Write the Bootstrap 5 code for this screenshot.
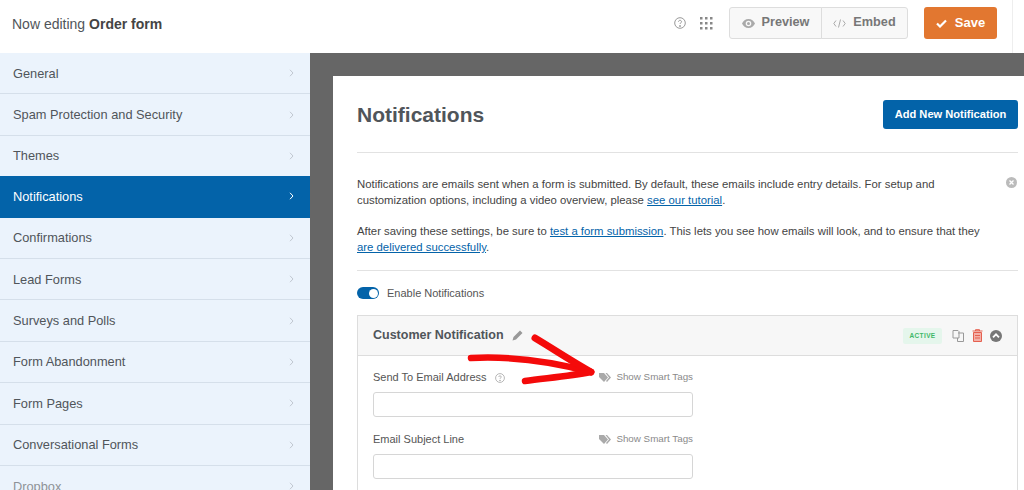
<!DOCTYPE html>
<html lang="en">

<head>
  <meta charset="UTF-8" />
  <meta name="viewport" content="width=device-width, initial-scale=1" />
  <title>Now editing Order form</title>
  <link href="https://cdn.jsdelivr.net/npm/bootstrap@5.3.3/dist/css/bootstrap.min.css" rel="stylesheet">
  <style>
    html, body { height: 490px; overflow: hidden; }
    body { font-family: "Liberation Sans", Arial, sans-serif; color: #50555a; background: #fff; }
    .top-bar { height: 53px; padding: 7px 15px 0 12px; margin-right: 11px; border-right: 1px solid #eee; }
    .top-title { font-size: 14px; color: #50555a; margin-top: 7px; }
    .top-title b { color: #444; }
    .top-gap { margin-right: 14px; }
    .top-btn { height: 32px; font-size: 12.7px; font-weight: 700; color: #777; background: #f8f8f8; border: 1px solid #ddd; border-radius: 3px; display: flex; align-items: center; gap: 7px; padding: 0; }
    .top-btn.prev { width: 93px; justify-content: center; }
    .top-btn.emb { width: 87px; justify-content: center; }
    .save-btn { width: 73px; height: 32px; padding: 0; font-size: 13px; font-weight: 700; background: #e27730; border: 0; border-radius: 3px; color: #fff; display: flex; align-items: center; justify-content: center; gap: 8px; }
    .work-area { height: 437px; }
    .side-menu { width: 310px; flex: none; border-radius: 0; background: #ebf3fc; overflow: hidden; }
    .side-menu .list-group-item { flex: none; height: 41.4px; padding: 0 13px; font-size: 12.8px; color: #50555a; background: #ebf3fc; border: 0; border-bottom: 1px solid #d5dfea; display: flex; justify-content: space-between; align-items: center; }
    .side-menu .list-group-item.active { background: #0363a9; color: #fff; border-color: #0363a9; }
    .side-menu .list-group-item.cut-off { color: #8e9297; }
    .side-menu svg { margin-right: 3px; color: #c0c7d0; }
    .side-menu .active svg { color: #fff; }
    .dark-area { background: #666; padding: 23px 0 0 23px; min-width: 0; }
    .main-panel { background: #fff; height: 100%; padding: 24px 6px 0 24px; overflow: hidden; }
    .panel-title { font-size: 21px; font-weight: 700; color: #50555a; margin: 0; line-height: 30px; }
    .panel-head { padding-bottom: 22px; }
    .add-btn { width: 135px; height: 29px; padding: 0; font-size: 11.1px; font-weight: 700; background: #0363a9; border: 0; border-radius: 3px; color: #fff; }
    .sep { margin: 0; border-color: #e2e2e2; opacity: 1; }
    .intro { font-size: 11.35px; line-height: 16px; color: #444; position: relative; padding-top: 23px; padding-bottom: 15px; }
    .intro p { margin: 0; width: 640px; }
    .intro p + p { margin-top: 15px; }
    .intro a { color: #0363a9; }
    .intro-close { position: absolute; right: 1px; top: 24px; }
    .switch-row { font-size: 11px; color: #555; height: 44px; }
    .blue-switch { width: 22px; height: 12px; border-radius: 6px; background: #0363a9; position: relative; flex: none; }
    .blue-switch::after { content: ""; position: absolute; right: 1.5px; top: 1.5px; width: 9px; height: 9px; background: #fff; border-radius: 50%; }
    .notif-card { border-radius: 0; border-color: #ddd; height: 300px; }
    .notif-head { height: 40px; padding: 0 15px; background: #f7f7f7; border-bottom: 1px solid #ddd; border-radius: 0 !important; }
    .notif-name { font-size: 12.5px; font-weight: 700; color: #50555a; }
    .active-tag { font-size: 6.5px; font-weight: 700; letter-spacing: .4px; color: #3fb868; background: #e5f6ec; height: 16px; width: 39px; border-radius: 2px; display: flex; align-items: center; justify-content: center; margin-right: 10px; }
    .head-icon { margin-left: 7px; }
    .field-box { width: 320px; margin-left: 15px; }
    .field-label { font-size: 11px; color: #555; height: 17px; }
    .tags-link { font-size: 9.8px; color: #8a8a8a; gap: 5px; }
    .field-box .form-control { height: 25px; border-radius: 3px; border-color: #d6d6d6; padding: 0 8px; margin-top: 6px; }
    .first-field { margin-top: 13px; }
    .second-field { margin-top: 14px; }
    .red-arrow { position: absolute; left: 465px; top: 330px; }
  </style>
</head>

<body>
  <div class="top-bar d-flex align-items-start">
    <div class="top-title">Now editing <b>Order form</b></div>
    <div class="ms-auto d-flex align-items-center">
      <svg width="12" height="12" viewBox="0 0 12 12" class="top-gap" fill="none" stroke="#999" stroke-width="1"><circle cx="6" cy="6" r="5.300"/><path d="M4.500 4.800c0-2 3-2 3 0 0 1.200-1.500 1-1.500 2.200"/><circle cx="6" cy="9" r=".5" fill="#999"/></svg>
      <svg width="13" height="13" viewBox="0 0 13 13" fill="#888" class="me-3"><rect x="0" y="0" width="2.500" height="2.500"/><rect x="5" y="0" width="2.500" height="2.500"/><rect x="10" y="0" width="2.500" height="2.500"/><rect x="0" y="5" width="2.500" height="2.500"/><rect x="5" y="5" width="2.500" height="2.500"/><rect x="10" y="5" width="2.500" height="2.500"/><rect x="0" y="10" width="2.500" height="2.500"/><rect x="5" y="10" width="2.500" height="2.500"/><rect x="10" y="10" width="2.500" height="2.500"/></svg>
      <div class="btn-group me-3">
        <button class="btn top-btn prev"><svg width="13" height="9" viewBox="0 0 13 9" fill="#aaa"><path d="M6.500 0C3.500 0 1.200 2 0 4.500 1.200 7 3.500 9 6.500 9S11.800 7 13 4.500C11.800 2 9.500 0 6.500 0Zm0 7.300a2.800 2.800 0 1 1 0-5.600 2.800 2.800 0 0 1 0 5.600Z"/><circle cx="6.500" cy="4.500" r="1.500"/></svg>Preview</button>
        <button class="btn top-btn emb"><svg width="13" height="9" viewBox="0 0 13 9" fill="none" stroke="#aaa" stroke-width="1"><path d="M3 1.500 .8 4.500 3 7.500M10 1.500l2.200 3-2.200 3M7.500 .5l-2 8"/></svg>Embed</button>
      </div>
      <button class="btn save-btn"><svg width="11" height="9" viewBox="0 0 11 9" fill="none" stroke="#fff" stroke-width="2.200"><path d="M1 4.500 4 7.500 10 1.500"/></svg>Save</button>
    </div>
  </div>

  <div class="work-area d-flex">
    <div class="list-group side-menu" id="sideMenu"></div>
    <div class="dark-area flex-grow-1">
      <div class="main-panel">
        <div class="panel-head d-flex justify-content-between align-items-start">
          <h1 class="panel-title">Notifications</h1>
          <button class="btn add-btn">Add New Notification</button>
        </div>
        <hr class="sep">
        <div class="intro">
          <p>Notifications are emails sent when a form is submitted. By default, these emails include entry details. For setup and customization options, including a video overview, please <a href="#">see our tutorial</a>.</p>
          <p>After saving these settings, be sure to <a href="#">test a form submission</a>. This lets you see how emails will look, and to ensure that they <a href="#">are delivered successfully</a>.</p>
          <svg class="intro-close" width="11" height="11" viewBox="0 0 11 11"><circle cx="5.500" cy="5.500" r="5.500" fill="#bbb"/><path d="M3.500 3.500l4 4M7.500 3.500l-4 4" stroke="#fff" stroke-width="1.300"/></svg>
        </div>
        <hr class="sep">
        <div class="switch-row d-flex align-items-center gap-2">
          <span class="blue-switch"></span><span>Enable Notifications</span>
        </div>
        <div class="card notif-card">
          <div class="card-header notif-head d-flex align-items-center">
            <span class="notif-name">Customer Notification</span>
            <svg class="ms-2" width="11" height="11" viewBox="0 0 11 11" fill="#999"><path d="M8 .5 10.500 3 4 9.500 .5 10.500 1.500 7Z"/></svg>
            <span class="active-tag ms-auto">ACTIVE</span>
            <svg width="13" height="13" viewBox="0 0 13 13" fill="none" stroke="#999" stroke-width="1"><path d="M1 1.500h5l1 1v6.500H1ZM6 4h5.500v8.500H5.500V9"/></svg>
            <svg class="head-icon" width="11" height="13" viewBox="0 0 11 13" fill="#f3b0a8" stroke="#e5604f" stroke-width="1"><path d="M1.500 3.500h8v9h-8ZM.5 2h10M3.500 2V.7h4V2M3 6.500h5M3 9h5"/></svg>
            <svg class="head-icon" width="12" height="12" viewBox="0 0 12 12"><circle cx="6" cy="6" r="6" fill="#777"/><path d="M3 7.300 6 4.300l3 3" fill="none" stroke="#fff" stroke-width="1.800"/></svg>
          </div>
          <div class="field-box first-field">
            <div class="field-label d-flex align-items-center">
              <span>Send To Email Address</span>
              <svg class="ms-2" width="10" height="10" viewBox="0 0 12 12" fill="none" stroke="#aaa" stroke-width="1"><circle cx="6" cy="6" r="5.300"/><path d="M4.500 4.800c0-2 3-2 3 0 0 1.200-1.500 1-1.500 2.200"/><circle cx="6" cy="9" r=".5" fill="#aaa"/></svg>
              <span class="tags-link ms-auto d-flex align-items-center"><svg width="12" height="9" viewBox="0 0 12 9" fill="#aaa"><path d="M0 0h5l4 4.500L5 9 0 4Z"/><path d="M6.500 0H8l4 4.500L8 9 7 8l3-3.500Z"/></svg>Show Smart Tags</span>
            </div>
            <input type="text" class="form-control">
          </div>
          <div class="field-box second-field">
            <div class="field-label d-flex align-items-center">
              <span>Email Subject Line</span>
              <span class="tags-link ms-auto d-flex align-items-center"><svg width="12" height="9" viewBox="0 0 12 9" fill="#aaa"><path d="M0 0h5l4 4.500L5 9 0 4Z"/><path d="M6.500 0H8l4 4.500L8 9 7 8l3-3.500Z"/></svg>Show Smart Tags</span>
            </div>
            <input type="text" class="form-control">
          </div>
        </div>
      </div>
    </div>
  </div>

  <svg class="red-arrow" width="135" height="60" viewBox="0 0 135 60" fill="none" stroke="#f40a0a" stroke-linecap="round" stroke-linejoin="round"><path d="M6 28C45 26 85 31 126 42" stroke-width="6.500"/><path d="M70 8C90 20 108 32 126 42" stroke-width="7"/><path d="M60 51C82 48 105 46 126 42" stroke-width="6.500"/></svg>

  <script>
    var items = ['General', 'Spam Protection and Security', 'Themes', 'Notifications', 'Confirmations', 'Lead Forms', 'Surveys and Polls', 'Form Abandonment', 'Form Pages', 'Conversational Forms', 'Dropbox'];
    var chevron = '<svg width="5" height="8" viewBox="0 0 5 8" fill="none" stroke="currentColor" stroke-width="1"><path d="M1 .8 4 4 1 7.200"/></svg>';
    var menu = document.getElementById('sideMenu');
    items.forEach(function (name) {
      var row = document.createElement('a');
      row.href = '#';
      row.className = 'list-group-item list-group-item-action';
      if (name === 'Notifications') row.classList.add('active');
      if (name === 'Dropbox') row.classList.add('cut-off');
      row.innerHTML = '<span>' + name + '</span>' + chevron;
      menu.appendChild(row);
    });
  </script>
</body>

</html>
